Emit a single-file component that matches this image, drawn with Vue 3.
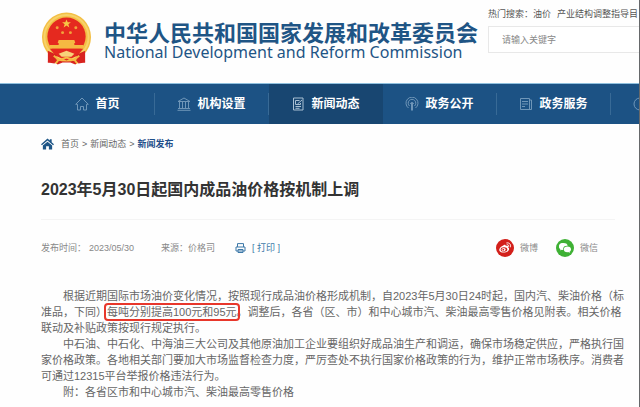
<template>
  <div class="page">
    <header class="header">
      <a class="brand" href="#">
        <svg class="emblem" viewBox="0 0 52 54" aria-hidden="true">
          <path d="M8 38l-1 13 6-1 4 3 5-2h8l5 2 4-3 6 1-1-13z" fill="#d8231f" />
          <circle cx="26" cy="25" r="25" fill="#f3bf45" />
          <circle cx="26" cy="25" r="22.500" fill="none" stroke="#f8d269" stroke-width="2" />
          <circle cx="26" cy="24.500" r="19.500" fill="#e5291f" />
          <path d="M26 7l1.200 3h3.300l-2.600 2 1 3.200-2.900-1.900-2.900 1.900 1-3.200-2.600-2h3.300z" fill="#f7c846" />
          <g fill="#f2a43c">
            <circle cx="16.500" cy="15.500" r="1.500" />
            <circle cx="35.500" cy="15.500" r="1.500" />
            <circle cx="22" cy="20.500" r="1.500" />
            <circle cx="30" cy="20.500" r="1.500" />
          </g>
          <path d="M18 28h16l1 3h-1v2h9v4H9v-4h9v-2h-1z" fill="#f5b942" />
          <path d="M9 37h34l-6 7-11 5-11-5z" fill="#e5291f" />
          <path d="M18 42l8-3 8 3-3 3H21z" fill="#f7d27a" />
          <path d="M7 39l9 4-2 9-7-1z" fill="#d8231f" />
          <path d="M45 39l-9 4 2 9 7-1z" fill="#d8231f" />
          <path d="M13 44l5 4-3 4M39 44l-5 4 3 4M17 49l9-3 9 3" fill="none" stroke="#f5b942" stroke-width="2" />
        </svg>
        <span class="names">
          <span class="cn">中华人民共和国国家发展和改革委员会</span>
          <span class="en">National Development and Reform Commission</span>
        </span>
      </a>
      <form class="search" @submit.prevent>
        <label class="hot" for="keyword">热门搜索：<a href="#">油价</a><a href="#">产业结构调整指导目</a></label>
        <input id="keyword" v-model="keyword" type="text" placeholder="请输入关键字" />
      </form>
    </header>

    <nav class="nav">
      <a v-for="item in menu" :key="item.icon" href="#" :class="{ active: item.active, last: !item.text }">
        <svg viewBox="0 0 14 14" aria-hidden="true"><path :d="item.icon" /></svg>
        <span v-if="item.text">{{ item.text }}</span>
      </a>
    </nav>

    <main class="content">
      <div class="crumbs">
        <svg viewBox="0 0 14 12" aria-hidden="true">
          <path d="M7 0l2.500 2.200V1h2v3L14 6.300l-1 1-6-5-6 5-1-1z" fill="#1d5586" />
          <path d="M2 7.500l5-4 5 4V12H8.500V8.500h-3V12H2z" fill="#1d5586" />
        </svg>
        <a href="#">首页</a><i>&gt;</i><a href="#">新闻动态</a><i>&gt;</i><a class="current" href="#">新闻发布</a>
      </div>

      <h1>2023年5月30日起国内成品油价格按机制上调</h1>

      <div class="meta">
        <span class="date">发布时间：<time>2023/05/30</time></span>
        <span class="source">来源：价格司</span>
        <button class="print" type="button">
          <svg viewBox="0 0 11 10" aria-hidden="true">
            <path d="M2.500 4V.6h6V4M1 4h9v4H1zM3 6.500h5v3H3z" fill="none" stroke="#3c78a8" />
          </svg>
          [ 打印 ]
        </button>
        <div class="share">
          <a href="#">
            <svg viewBox="0 0 18 18" aria-hidden="true">
              <circle cx="9" cy="9" r="9" fill="#d3201b" />
              <path d="M8 6c1-.6 2-.3 1.700.9 1.600-.6 2.800 0 2.200 1.300 3 1.300.3 5.300-4 5.300-5.600 0-5.800-3.500-2.400-6C6.400 6.900 7.300 6.300 8 6z" fill="#fff" />
              <ellipse cx="8" cy="10.500" rx="3.300" ry="2.200" fill="#d3201b" />
              <ellipse cx="7.600" cy="10.600" rx="2" ry="1.600" fill="#fff" />
              <circle cx="7.300" cy="10.700" r=".9" fill="#d3201b" />
              <path d="M10.800 3.900c2.600-.5 4.400 1.600 3.700 4M11.100 5.700c1.200-.2 2 .6 1.700 1.800" fill="none" stroke="#fff" stroke-linecap="round" />
            </svg>
            <span>微博</span>
          </a>
          <a href="#">
            <svg viewBox="0 0 18 18" aria-hidden="true">
              <circle cx="9" cy="9" r="9" fill="#3fb135" />
              <path d="M7.300 4C4.700 4 3 5.500 3 7.400c0 1.100.6 2 1.500 2.600L4 11.500l1.800-.9 1.500.2z" fill="#fff" />
              <ellipse cx="7.400" cy="7.400" rx="4.300" ry="3.400" fill="#fff" />
              <ellipse cx="11.300" cy="10.200" rx="4.200" ry="3.400" fill="#3fb135" />
              <ellipse cx="11.400" cy="10.300" rx="3.600" ry="2.900" fill="#fff" />
              <path d="M12 12.800l1.800 1.200-.3-1.800z" fill="#fff" />
            </svg>
            <span>微信</span>
          </a>
        </div>
      </div>

      <article>
        <p>根据近期国际市场油价变化情况，按照现行成品油价格形成机制，自2023年5月30日24时起，国内汽、柴油价格（标准品，下同）<mark>每吨分别提高100元和95元</mark>。调整后，各省（区、市）和中心城市汽、柴油最高零售价格见附表。相关价格联动及补贴政策按现行规定执行。</p>
        <p>中石油、中石化、中海油三大公司及其他原油加工企业要组织好成品油生产和调运，确保市场稳定供应，严格执行国家价格政策。各地相关部门要加大市场监督检查力度，严厉查处不执行国家价格政策的行为，维护正常市场秩序。消费者可通过12315平台举报价格违法行为。</p>
        <p>附：各省区市和中心城市汽、柴油最高零售价格</p>
      </article>
    </main>
  </div>
</template>

<script setup>
import { ref } from 'vue'

const keyword = ref('')

const menu = [
  { text: '首页', icon: 'M.7 7.300L7 1l6.300 6.300H11.500V13h-3V9.500h-3V13h-3V7.300z' },
  { text: '机构设置', icon: 'M1 4.500L7 1l6 3.500zM2.500 5v6.500M5.500 5v6.500M8.500 5v6.500M11.500 5v6.500M1 11.500h12M.5 13.300h13' },
  { text: '新闻动态', icon: 'M2.500 1h9.500v12H2.500zM4.500 3.500h4M4.500 3.500v4h5V6M11 3L6.500 7M4.500 9.500h5.500M4.500 11.300h4', active: true },
  { text: '政务公开', icon: 'M3.500 11A6 6 0 1 1 10.500 11M4.500 9A3.800 3.800 0 1 1 9.500 9M5.500 7A1.500 1.500 0 1 1 8.500 7M6.500 6v7.500M7.500 6v7.500' },
  { text: '政务服务', icon: 'M1.500 1.500h9v11h-9zM10.500 3h2v9.500h-3M3 4.500h6M3 7h6M3 9.500h3' },
  { text: '', icon: 'M7 1a6 6 0 1 1 0 12A6 6 0 0 1 7 1z' }
]
</script>

<style>
body {
  margin: 0;
  background: #fff;
}
</style>

<style scoped>
.page {
  box-sizing: border-box;
  min-height: 100vh;
  border-right: 1px solid #66686a;
  background: #fefefe;
  color: #666;
  font: 9px/16px "Liberation Sans", "Noto Sans CJK SC", sans-serif;
  overflow: hidden;
}
a {
  color: inherit;
  text-decoration: none;
}
svg {
  display: block;
  flex: none;
}

.header {
  display: flex;
  height: 83px;
  padding-left: 41px;
  border-bottom: 1px solid #8fc0de;
}
.brand {
  display: flex;
  flex: none;
  gap: 12px;
  padding-top: 12px;
  color: #1f5585;
}
.emblem {
  width: 51px;
  height: 54px;
}
.names {
  display: flex;
  flex-direction: column;
  padding-top: 6px;
  white-space: nowrap;
}
.cn {
  font: bold 22px/26px "Noto Sans CJK SC", sans-serif;
}
.en {
  font: 16px/16px "Noto Sans", sans-serif;
}
.search {
  flex: 1;
  min-width: 0;
  margin-left: 10px;
  padding-top: 6px;
}
.hot {
  display: flex;
  height: 20px;
  color: #555;
  white-space: nowrap;
}
.hot a {
  margin-right: 6px;
}
.search input {
  display: block;
  box-sizing: border-box;
  width: 100%;
  height: 27px;
  padding: 0 13px;
  border: 1px solid #e8e8e8;
  border-right: 0;
  background: #fff;
  color: #555;
  font: inherit;
}
.search input::placeholder {
  color: #888;
}

.nav {
  display: flex;
  height: 40px;
  padding-left: 41px;
  background: #1c5284;
  overflow: hidden;
}
.nav a {
  display: flex;
  box-sizing: border-box;
  flex: 0 0 114px;
  align-items: center;
  justify-content: center;
  gap: 6px;
  padding-right: 1px;
  color: #fff;
  font-size: 12px;
  font-weight: bold;
  background: linear-gradient(#386a96, #386a96) right center / 1px 22px no-repeat;
}
.nav a.active {
  background: #184671;
}
.nav a.last {
  justify-content: flex-start;
  padding-left: 22px;
}
.nav svg {
  width: 14px;
  height: 14px;
  fill: none;
  stroke: #6f96b8;
}
.nav .active svg {
  stroke: #a9c0d4;
}

.content {
  padding: 12px 13px 8px 41px;
}
.crumbs {
  display: flex;
  align-items: center;
}
.crumbs svg {
  width: 13px;
  height: 12px;
  margin-right: 7px;
}
.crumbs i {
  margin: 0 3px;
  font-style: normal;
}
.crumbs .current {
  color: #1f4f8a;
  font-weight: bold;
}
h1 {
  margin: 26px 11px 0 0;
  padding-bottom: 17px;
  border-bottom: 1px solid #f4f4f4;
  color: #333;
  font-size: 16px;
  line-height: 24px;
}
.meta {
  display: flex;
  align-items: center;
  height: 18px;
  margin: 19px 28px 0 0;
  color: #888;
}
.meta time {
  margin-left: 3px;
}
.source {
  margin: 0 20px 0 27px;
}
.print {
  display: flex;
  align-items: center;
  gap: 6px;
  padding: 0;
  border: 0;
  background: none;
  color: #3c78a8;
  font: inherit;
}
.print svg {
  width: 11px;
  height: 10px;
}
.share {
  display: flex;
  gap: 18px;
  margin-left: auto;
}
.share a {
  display: flex;
  align-items: center;
  gap: 6px;
}
.share svg {
  width: 18px;
  height: 18px;
}

article {
  margin-top: 31px;
  font-size: 11px;
}
p {
  margin: 0;
  text-indent: 2em;
}
mark {
  outline: 2px solid #e8372b;
  outline-offset: 1px;
  border-radius: 1px;
  background: none;
  color: inherit;
}
</style>
